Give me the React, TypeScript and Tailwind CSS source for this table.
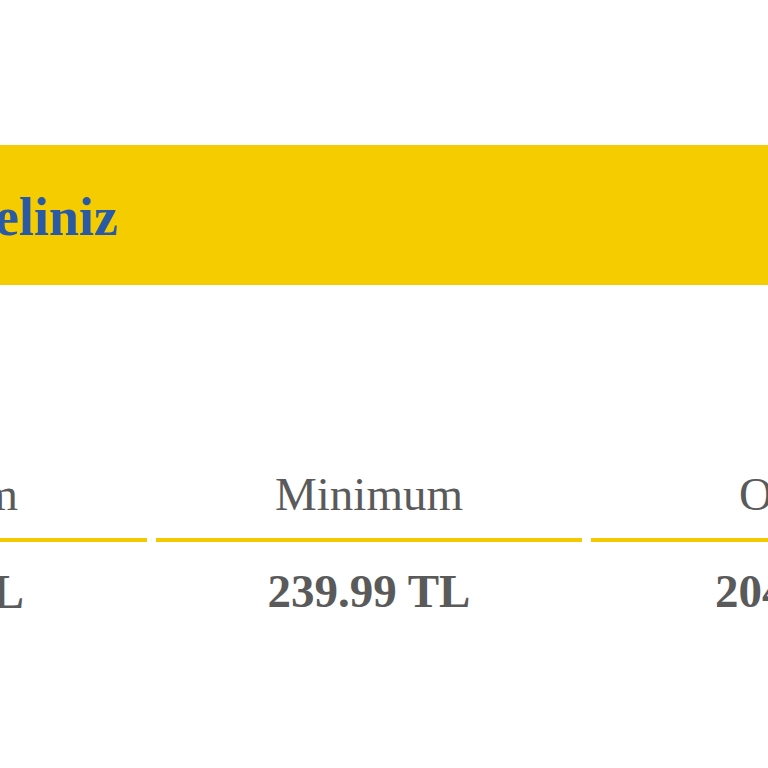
const serif = { fontFamily: '"Liberation Serif", "Times New Roman", serif' };

// ─── Price columns ────────────────────────────────────────────────────────────

const columns = [
  { label: "Maksimum", price: "1.249.99 TL" },
  { label: "Minimum", price: "239.99 TL" },
  { label: "Ortalama", price: "2049.99 TL" },
];

export default function App() {
  return (
    <div
      className="w-[768px] h-[768px] overflow-hidden bg-white"
      style={serif}
    >
      {/* Spacer above the banner */}
      <div className="h-[145px]" />

      {/* Yellow banner */}
      <div className="h-[140px] bg-[#f5cc00] flex items-center">
        <div className="w-[118px] flex justify-end whitespace-nowrap">
          <h1 className="text-[54px] leading-none font-bold text-[#2b5aa5] pt-[3px]">
            Tarifenizi Seçmeliniz
          </h1>
        </div>
      </div>

      {/* Price table */}
      <div className="flex gap-[9px] mt-[186px] whitespace-nowrap">
        {/* Left column (clipped) */}
        <div className="w-[147px] shrink-0 flex flex-col items-end">
          <span className="text-[47px] leading-none text-[#5a5a5a] mr-[129px]">
            {columns[0].label}
          </span>
          <div className="h-[4px] w-full bg-[#f3c900] mt-[20px]" />
          <span className="text-[48px] leading-none font-bold text-[#5a5a5a] mr-[123px] mt-[26px]">
            {columns[0].price}
          </span>
        </div>

        {/* Middle column */}
        <div className="w-[426px] shrink-0 flex flex-col items-center">
          <span className="text-[47px] leading-none text-[#5a5a5a]">
            {columns[1].label}
          </span>
          <div className="h-[4px] w-full bg-[#f3c900] mt-[20px]" />
          <span className="text-[47px] leading-none font-bold text-[#5a5a5a] mt-[26px]">
            {columns[1].price}
          </span>
        </div>

        {/* Right column (clipped) */}
        <div className="w-[426px] shrink-0 flex flex-col">
          <span className="text-[47px] leading-none text-[#5a5a5a] pl-[148px]">
            {columns[2].label}
          </span>
          <div className="h-[4px] w-full bg-[#f3c900] mt-[20px]" />
          <span className="text-[47px] leading-none font-bold text-[#5a5a5a] pl-[124px] mt-[26px]">
            {columns[2].price}
          </span>
        </div>
      </div>
    </div>
  );
}
